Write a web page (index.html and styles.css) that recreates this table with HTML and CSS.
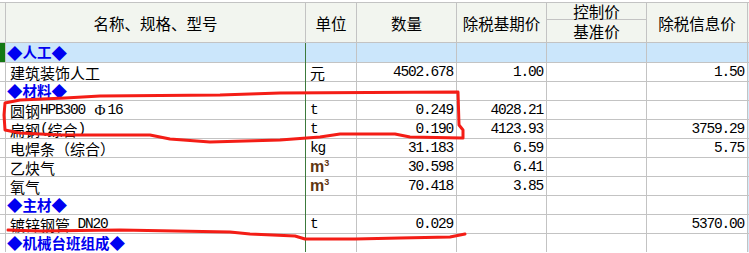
FILE: index.html
```html
<!DOCTYPE html>
<html lang="zh-CN">
<head>
<meta charset="utf-8">
<title>材料表</title>
<link rel="stylesheet" href="styles.css">
</head>
<body>
<div class="sheet">
  <div class="head">
    <div class="h0"></div>
    <div class="hc">名称、规格、型号</div>
    <div class="hc">单位</div>
    <div class="hc">数量</div>
    <div class="hc">除税基期价</div>
    <div class="hsplit"><span>控制价</span><span>基准价</span></div>
    <div class="hc">除税信息价</div>
    <div class="hc hx"></div>
  </div>
  <div class="body">
    <div class="row sel">
      <div class="c0 mark"></div><div class="name grp"><span class="dia">◆</span>人工<span class="dia">◆</span></div><div></div><div></div><div></div><div></div><div></div><div class="x"></div>
    </div>
    <div class="row">
      <div class="c0"></div><div class="name">建筑装饰人工</div><div class="unit">元</div><div class="num">4502.678</div><div class="num">1.00</div><div></div><div class="num">1.50</div><div class="x"></div>
    </div>
    <div class="row">
      <div class="c0"></div><div class="name grp"><span class="dia">◆</span>材料<span class="dia">◆</span></div><div></div><div></div><div></div><div></div><div></div><div class="x"></div>
    </div>
    <div class="row">
      <div class="c0"></div><div class="name">圆钢<span class="a">HPB300 </span><span class="phi">Φ</span><span class="a">16</span></div><div class="unit a">t</div><div class="num">0.249</div><div class="num">4028.21</div><div></div><div></div><div class="x"></div>
    </div>
    <div class="row">
      <div class="c0"></div><div class="name">扁钢<span class="a">(</span>综合<span class="a">)</span></div><div class="unit a">t</div><div class="num">0.190</div><div class="num">4123.93</div><div></div><div class="num">3759.29</div><div class="x"></div>
    </div>
    <div class="row">
      <div class="c0"></div><div class="name">电焊条（综合）</div><div class="unit a">kg</div><div class="num">31.183</div><div class="num">6.59</div><div></div><div class="num">5.75</div><div class="x"></div>
    </div>
    <div class="row">
      <div class="c0"></div><div class="name">乙炔气</div><div class="unit"><span class="m3">m<sup>3</sup></span></div><div class="num">30.598</div><div class="num">6.41</div><div></div><div></div><div class="x"></div>
    </div>
    <div class="row">
      <div class="c0"></div><div class="name">氧气</div><div class="unit"><span class="m3">m<sup>3</sup></span></div><div class="num">70.418</div><div class="num">3.85</div><div></div><div></div><div class="x"></div>
    </div>
    <div class="row">
      <div class="c0"></div><div class="name grp"><span class="dia">◆</span>主材<span class="dia">◆</span></div><div></div><div></div><div></div><div></div><div></div><div class="x"></div>
    </div>
    <div class="row">
      <div class="c0"></div><div class="name">镀锌钢管<span class="a"> DN20</span></div><div class="unit a">t</div><div class="num">0.029</div><div></div><div></div><div class="num">5370.00</div><div class="x"></div>
    </div>
    <div class="row">
      <div class="c0"></div><div class="name grp"><span class="dia">◆</span>机械台班组成<span class="dia">◆</span></div><div></div><div></div><div></div><div></div><div></div><div class="x"></div>
    </div>
  </div>
</div>
<svg class="ink" width="749" height="253" viewBox="0 0 749 253">
  <path d="M462 138 L410 137 L395 134 L340 134 L320 137 L280 140 L210 142 L170 139 L150 135 L60 135 L20 133 L5 130 L4 115 L5 103 L20 100 L65 98 L100 96 L220 95 L280 93 L458 92 L459 125 L463 130 L463 138"/>
  <path d="M8 230 L40 231 L120 230 L230 232 L250 234 L295 236 L305 239 L355 239 L400 238 L450 237 L465 234"/>
</svg>
</body>
</html>
```

FILE: styles.css
```css
html, body {
  margin: 0;
  padding: 0;
  background: #ffffff;
  overflow: hidden;
  width: 749px;
  height: 253px;
}

body {
  position: relative;
  font-family: "Noto Sans CJK SC", "Noto Sans", sans-serif;
  font-size: 15px;
  color: #000;
}

.sheet {
  margin-top: 2px;
  padding-top: 1px;
  background: #c3c3c3;
  display: flex;
  flex-direction: column;
  gap: 1px;
  width: 768px;
}

.head,
.body {
  display: grid;
  grid-template-columns: 5px 299px 50px 99px 89px 99px 100px 20px;
  column-gap: 1px;
  row-gap: 1px;
  background: #c3c3c3;
}

.head {
  grid-template-rows: 39px;
}

.head > div {
  background: #f2f5ef;
}

.hc {
  display: flex;
  align-items: center;
  justify-content: center;
  padding-top: 2px;
  box-sizing: border-box;
  white-space: nowrap;
  line-height: 1;
  font-size: 15.5px;
}

.hsplit {
  display: grid;
  grid-template-rows: 16px 22px;
  row-gap: 1px;
  background: #c3c3c3 !important;
}

.hsplit span {
  background: #f2f5ef;
  display: flex;
  align-items: center;
  justify-content: center;
  line-height: 1;
  padding-top: 1px;
  font-size: 15.5px;
}

.body {
  position: relative;
  grid-template-rows: 19px repeat(10, 18px);
}

.body::after {
  content: "";
  position: absolute;
  left: 305px;
  top: 0;
  bottom: 0;
  width: 1px;
  background: #3c7a3c;
}

.row {
  display: contents;
}

.row > div {
  background: #ffffff;
  display: flex;
  align-items: center;
  white-space: nowrap;
  overflow: hidden;
  line-height: 1;
}

.row > div.x {
  background: #d3ebfb;
}

.sel > div,
.sel > div.x {
  background: #cbe6fb;
}

.sel > div.mark {
  background: #137813;
}

.name {
  padding-left: 4px;
}

.row > .name.grp {
  padding-left: 1px;
  color: #0000f0;
  font-weight: 700;
  overflow: visible;
  font-size: 14.5px;
}

.dia {
  font-size: 15.5px;
  line-height: 1;
}

.unit {
  padding-left: 4px;
}

.num {
  justify-content: flex-end;
  padding-right: 3px;
  font-family: "Liberation Mono", monospace;
  font-size: 14.5px;
  letter-spacing: -1.2px;
}

.a {
  font-family: "Liberation Mono", monospace;
  font-size: 14.5px;
  letter-spacing: -1.2px;
  white-space: pre;
}

.phi {
  display: inline-block;
  width: 15px;
  text-align: center;
  font-family: "Liberation Serif", serif;
}

.m3 {
  font-family: "Liberation Sans", sans-serif;
  font-weight: 700;
  font-size: 16px;
  color: #5e3510;
}

.m3 sup {
  font-size: 9px;
  vertical-align: 6px;
  line-height: 0;
}

.ink {
  position: absolute;
  left: 0;
  top: 0;
  pointer-events: none;
}

.ink path {
  fill: none;
  stroke: #f41d16;
  stroke-width: 3;
  stroke-linejoin: round;
  stroke-linecap: round;
}
```
